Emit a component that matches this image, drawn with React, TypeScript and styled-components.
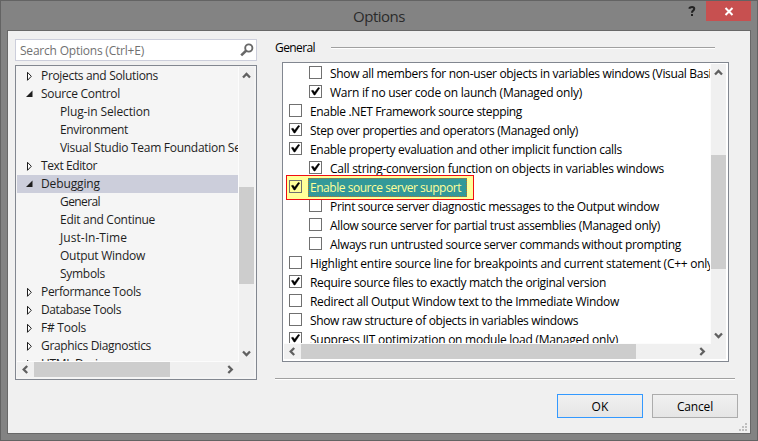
import React, { useLayoutEffect, useRef } from 'react';
import styled, { createGlobalStyle, css } from 'styled-components';

const GlobalStyle = createGlobalStyle`
  * { box-sizing: border-box; }
  body { margin: 0; overflow: hidden; }
`;

const Window = styled.div`
  width: 758px;
  height: 441px;
  display: flex;
  flex-direction: column;
  background: #838383;
  border: 1px solid #636363;
  padding: 0 6px 6px;
  font: 12px/18px 'Open Sans', 'Noto Sans', sans-serif;
  color: #000;
`;

const TitleBar = styled.header`
  height: 29px;
  flex: none;
  display: grid;
  grid-template-columns: 346px 1fr auto 45px;
  align-items: start;
`;

const Title = styled.h1`
  grid-column: 2;
  margin: 5px 0 0;
  font-size: 15px;
  line-height: 20px;
  font-weight: 400;
  color: #2b2b2b;
`;

const HelpButton = styled.button`
  width: 24px;
  height: 20px;
  margin-right: 2px;
  padding: 0;
  border: 0;
  background: none;
  color: #222;
  line-height: 0;
`;

const CloseButton = styled(HelpButton)`
  width: 45px;
  margin: 0;
  background: #c75050;
  color: #fff;
`;

const Client = styled.main`
  flex: 1;
  min-height: 0;
  display: grid;
  grid-template-columns: 242px 1fr;
  column-gap: 18px;
  background: #f0f0f0;
  border: 1px solid #686868;
  padding: 8px 12px 0 7px;
`;

const Sidebar = styled.aside`
  display: flex;
  flex-direction: column;
  gap: 4px;
`;

const SearchBox = styled.div`
  height: 22px;
  display: flex;
  align-items: center;
  justify-content: space-between;
  padding: 1px 2px 0 4px;
  background: #fff;
  border: 1px solid #cccedb;
  color: #717171;
`;

const SearchIcon = styled.svg`
  margin-top: -2px;
`;

const ScrollPane = styled.div<{ $height: number; $inner: number; $bg: string }>`
  height: ${p => p.$height}px;
  display: grid;
  grid-template-columns: ${p => p.$inner}px 15px;
  grid-template-rows: 1fr 15px;
  padding: 1px 2px 2px 1px;
  background: ${p => p.$bg};
  border: 1px solid #828790;
`;

const Viewport = styled.div`
  min-height: 0;
  overflow: hidden;
  border-right: 1px solid #fcfcfc;
  border-bottom: 1px solid #fcfcfc;
`;

const Track = styled.div<{ $vertical?: boolean }>`
  display: flex;
  flex-direction: ${p => (p.$vertical ? 'column' : 'row')};
  background: #f0f0f0;
  ${p => p.$vertical && css`grid-row: 1 / 3; grid-column: 2;`}
`;

const Arrow = styled.span`
  width: 17px;
  height: 15px;
  flex: none;
  display: flex;
  align-items: center;
  justify-content: center;
`;

const VArrow = styled(Arrow)`
  width: 15px;
  height: 17px;
`;

const Spacer = styled.div<{ $size?: number }>`
  flex: ${p => (p.$size === undefined ? '1' : `0 0 ${p.$size}px`)};
`;

const Thumb = styled.div<{ $size: number }>`
  flex: 0 0 ${p => p.$size}px;
  background: #cdcdcd;
`;

const TreeRow = styled.div<{ $child?: boolean; $selected?: boolean }>`
  height: 18px;
  display: flex;
  align-items: center;
  padding-left: ${p => (p.$child ? 43 : 9)}px;
  background: ${p => (p.$selected ? '#cccedb' : 'transparent')};
  color: #1e1e1e;
`;

const Expander = styled.span`
  width: 15px;
  flex: none;
  line-height: 0;
`;

const Label = styled.span`
  white-space: pre;
  flex: none;
`;

const Content = styled.section`
  display: flex;
  flex-direction: column;
`;

const GroupHeader = styled.div`
  height: 18px;
  display: flex;
  align-items: center;
  margin-right: 23px;
`;

const GroupTitle = styled.div`
  width: 56px;
`;

const Rule = styled.div`
  flex: 1;
  height: 2px;
  margin-top: -1px;
  background: #a0a0a0;
  border-bottom: 1px solid #fff;
`;

const ListFrame = styled.div`
  margin: 5px 9px 0 7px;
`;

const OptionRow = styled.div<{ $child?: boolean }>`
  height: 19px;
  display: flex;
  align-items: flex-start;
  padding: 2px 0 0 ${p => (p.$child ? 25 : 5)}px;
`;

const Highlight = styled(OptionRow)`
  width: 188px;
  height: 25px;
  margin: -3px 0 -3px 2px;
  padding: 4px 0 0 2px;
  position: relative;
  background: #ffff99;
  border: 1px solid #f00d12;
`;

const Check = styled.span`
  width: 13px;
  height: 13px;
  flex: none;
  margin-right: 8px;
  background: #fff;
  border: 1px solid #707070;
  line-height: 0;
`;

const HighlightCheck = styled(Check)`
  margin-right: 6px;
  background: #ffff99;
`;

const OptionLabel = styled(Label)`
  line-height: 17px;
  margin-top: -1px;
`;

const SelectedLabel = styled.span`
  width: 159px;
  height: 19px;
  margin-top: -2px;
  padding-left: 1px;
  line-height: 17px;
  background: #339999;
  border: 1px dotted #b5702c;
  color: #ffff99;
  white-space: pre;
`;

const FooterRule = styled(Rule)`
  flex: none;
  margin: 16px 3px 0 0;
`;

const Footer = styled.footer`
  display: flex;
  justify-content: flex-end;
  gap: 9px;
  margin-top: 14px;
`;

const Button = styled.button<{ $primary?: boolean }>`
  width: 86px;
  height: 24px;
  padding: 0;
  border: 1px solid ${p => (p.$primary ? '#3399ff' : '#acacac')};
  background: linear-gradient(#f0f0f0, #e5e5e5);
  font: inherit;
  line-height: 21px;
  color: #000;
`;

const Grip = styled.svg`
  display: block;
  margin: 5px -9px 0 auto;
`;

/** Text tracked so that it takes exactly the given advance width. */
function Fit({ text, width }: { text: string; width: number }) {
  const ref = useRef<HTMLSpanElement>(null);
  useLayoutEffect(() => {
    const el = ref.current!;
    el.style.letterSpacing = '0px';
    const natural = el.getBoundingClientRect().width;
    el.style.letterSpacing = `${(width - natural) / text.length}px`;
  }, [text, width]);
  return <Label ref={ref}>{text}</Label>;
}

const chevrons = {
  up: 'M1 6.5 4.5 3 8 6.5',
  down: 'M1 2.5 4.5 6 8 2.5',
  left: 'M6.2 1 2.7 4.5 6.2 8',
  right: 'M2.3 1 5.8 4.5 2.3 8',
};

function Chevron({ dir }: { dir: keyof typeof chevrons }) {
  return (
    <svg width="9" height="9">
      <path d={chevrons[dir]} fill="none" stroke="#606060" strokeWidth="2.3" />
    </svg>
  );
}

function VBar({ before, size }: { before: number; size: number }) {
  return (
    <Track $vertical>
      <VArrow><Chevron dir="up" /></VArrow>
      <Spacer $size={before} />
      <Thumb $size={size} />
      <Spacer />
      <VArrow><Chevron dir="down" /></VArrow>
      <Spacer $size={15} />
    </Track>
  );
}

function HBar({ size }: { size: number }) {
  return (
    <Track>
      <Arrow><Chevron dir="left" /></Arrow>
      <Thumb $size={size} />
      <Spacer />
      <Arrow><Chevron dir="right" /></Arrow>
    </Track>
  );
}

function Tick() {
  return (
    <svg width="11" height="11">
      <path d="M1.4 4.7 3.1 4.2 4.6 6.3 8.3 1.5 9.7 2 5 9H4Z" fill="#000" stroke="#000" strokeWidth=".5" />
    </svg>
  );
}

type Node = { text: string; w: number; kind: 'open' | 'closed' | 'child'; selected?: boolean };

const tree: Node[] = [
  { text: 'Projects and Solutions', w: 117, kind: 'closed' },
  { text: 'Source Control', w: 79, kind: 'open' },
  { text: 'Plug-in Selection', w: 90, kind: 'child' },
  { text: 'Environment', w: 68, kind: 'child' },
  { text: 'Visual Studio Team Foundation Server', w: 202, kind: 'child' },
  { text: 'Text Editor', w: 56, kind: 'closed' },
  { text: 'Debugging', w: 59, kind: 'open', selected: true },
  { text: 'General', w: 40, kind: 'child' },
  { text: 'Edit and Continue', w: 95, kind: 'child' },
  { text: 'Just-In-Time', w: 67, kind: 'child' },
  { text: 'Output Window', w: 85, kind: 'child' },
  { text: 'Symbols', w: 45, kind: 'child' },
  { text: 'Performance Tools', w: 100, kind: 'closed' },
  { text: 'Database Tools', w: 80, kind: 'closed' },
  { text: 'F# Tools', w: 45, kind: 'closed' },
  { text: 'Graphics Diagnostics', w: 110, kind: 'closed' },
  { text: 'HTML Designer', w: 81, kind: 'closed' },
];

type Option = { text: string; w: number; child?: boolean; on?: boolean; highlighted?: boolean };

const options: Option[] = [
  { text: 'Show all members for non-user objects in variables windows (Visual Basic only)', w: 415, child: true },
  { text: 'Warn if no user code on launch (Managed only)', w: 252, child: true, on: true },
  { text: 'Enable .NET Framework source stepping', w: 212 },
  { text: 'Step over properties and operators (Managed only)', w: 268, on: true },
  { text: 'Enable property evaluation and other implicit function calls', w: 312, on: true },
  { text: 'Call string-conversion function on objects in variables windows', w: 334, child: true, on: true },
  { text: 'Enable source server support', w: 151, on: true, highlighted: true },
  { text: 'Print source server diagnostic messages to the Output window', w: 329, child: true },
  { text: 'Allow source server for partial trust assemblies (Managed only)', w: 330, child: true },
  { text: 'Always run untrusted source server commands without prompting', w: 351, child: true },
  { text: 'Highlight entire source line for breakpoints and current statement (C++ only)', w: 406 },
  { text: 'Require source files to exactly match the original version', w: 296, on: true },
  { text: 'Redirect all Output Window text to the Immediate Window', w: 309 },
  { text: 'Show raw structure of objects in variables windows', w: 268 },
  { text: 'Suppress JIT optimization on module load (Managed only)', w: 308, on: true },
];

export default function App() {
  return (
    <>
      <GlobalStyle />
      <Window>
        <TitleBar>
          <Title><Fit text="Options" width={52} /></Title>
          <HelpButton aria-label="Help">
            <svg width="24" height="20">
              <path d="M9.6 7.7V7Q10 6 12 6q2.2 0 2.2 1.8 0 1.2-1.1 1.9-1.1.7-1.1 2" fill="none" stroke="currentColor" strokeWidth="2.1" />
              <path d="M11 13h2v2h-2z" fill="currentColor" />
            </svg>
          </HelpButton>
          <CloseButton aria-label="Close">
            <svg width="45" height="20">
              <path d="M19.5 7 26.5 14M26.5 7 19.5 14" stroke="currentColor" strokeWidth="2" />
            </svg>
          </CloseButton>
        </TitleBar>
        <Client>
          <Sidebar>
            <SearchBox>
              <Fit text="Search Options (Ctrl+E)" width={124} />
              <SearchIcon width="14" height="14">
                <circle cx="8.8" cy="5" r="3.6" fill="none" stroke="#686868" strokeWidth="1.9" />
                <path d="M6.3 7.5 1.2 12.4" stroke="#686868" strokeWidth="2.6" />
              </SearchIcon>
            </SearchBox>
            <ScrollPane $height={315} $inner={222} $bg="#f5f5f5">
              <Viewport>
                {tree.map(n => (
                  <TreeRow key={n.text} $child={n.kind === 'child'} $selected={n.selected}>
                    {n.kind !== 'child' && (
                      <Expander>
                        <svg width="8" height="10">
                          {n.kind === 'open'
                            ? <path d="M6.5 1.5V8H0Z" fill="#1e1e1e" />
                            : <path d="M1.5 1.3 5.3 5.3 1.5 9.3Z" fill="#fff" stroke="#1e1e1e" />}
                        </svg>
                      </Expander>
                    )}
                    <Fit text={n.text} width={n.w} />
                  </TreeRow>
                ))}
              </Viewport>
              <VBar before={103} size={97} />
              <HBar size={136} />
            </ScrollPane>
          </Sidebar>
          <Content>
            <GroupHeader>
              <GroupTitle><Fit text="General" width={40} /></GroupTitle>
              <Rule />
            </GroupHeader>
            <ListFrame>
              <ScrollPane $height={300} $inner={427} $bg="#fff">
                <Viewport>
                  {options.map(o =>
                    o.highlighted ? (
                      <Highlight key={o.text}>
                        <HighlightCheck><Tick /></HighlightCheck>
                        <SelectedLabel><Fit text={o.text} width={o.w} /></SelectedLabel>
                      </Highlight>
                    ) : (
                      <OptionRow key={o.text} $child={o.child}>
                        <Check>{o.on && <Tick />}</Check>
                        <OptionLabel><Fit text={o.text} width={o.w} /></OptionLabel>
                      </OptionRow>
                    ),
                  )}
                </Viewport>
                <VBar before={74} size={114} />
                <HBar size={335} />
              </ScrollPane>
            </ListFrame>
            <FooterRule />
            <Footer>
              <Button $primary><Fit text="OK" width={17} /></Button>
              <Button><Fit text="Cancel" width={36} /></Button>
            </Footer>
            <Grip width="8" height="8">
              <path d="M6 0h2v2H6zM3 3h2v2H3zM6 3h2v2H6zM0 6h2v2H0zM3 6h2v2H3zM6 6h2v2H6z" fill="#bfbfbf" />
            </Grip>
          </Content>
        </Client>
      </Window>
    </>
  );
}
